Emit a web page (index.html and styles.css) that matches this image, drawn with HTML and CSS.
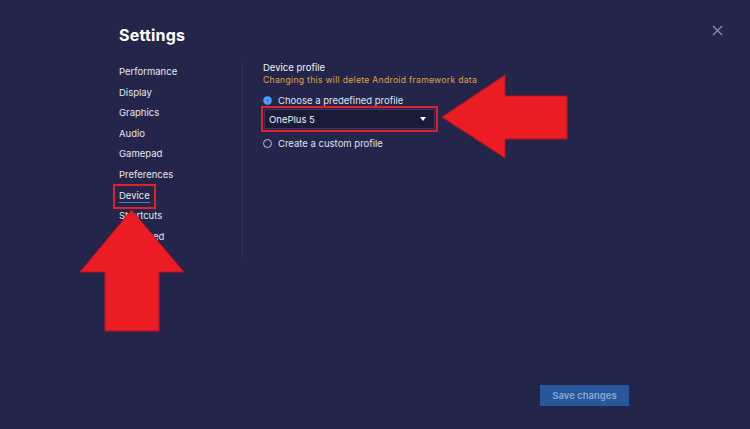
FILE: index.html
```html
<!DOCTYPE html>
<html lang="en">
<head>
    <meta charset="UTF-8">
    <meta name="viewport" content="width=device-width, initial-scale=1.0">
    <title>Settings</title>
    <link rel="stylesheet" href="styles.css">
</head>
<body>
    <div class="settings">
        <div class="close">
            <svg width="11" height="11" viewBox="0 0 11 11"><path d="M1 1L10 10M10 1L1 10" stroke="#8e93b6" stroke-width="1.2"/></svg>
        </div>

        <div class="layout">
            <div class="sidebar">
                <h1 class="title">Settings</h1>
                <ul class="nav">
                    <li>Performance</li>
                    <li>Display</li>
                    <li>Graphics</li>
                    <li>Audio</li>
                    <li>Gamepad</li>
                    <li>Preferences</li>
                    <li class="active"><span>Device</span></li>
                    <li>Shortcuts</li>
                    <li>Advanced</li>
                </ul>
            </div>

            <div class="panel">
                <div class="label">Device profile</div>
                <div class="warning">Changing this will delete Android framework data</div>
                <div class="radio-row">
                    <span class="radio checked"></span>
                    <span>Choose a predefined profile</span>
                </div>
                <div class="select-wrap">
                    <div class="select">
                        <span>OnePlus 5</span>
                        <span class="caret"></span>
                    </div>
                </div>
                <div class="radio-row">
                    <span class="radio"></span>
                    <span>Create a custom profile</span>
                </div>
            </div>
        </div>

        <div class="footer">
            <button class="save">Save changes</button>
        </div>

        <!-- annotation arrows -->
        <svg class="arrows" width="750" height="429" viewBox="0 0 750 429">
            <polygon points="442,117 505,75 505,96 567,96 567,139 505,139 505,158" fill="#ec1c24" stroke="#b5141c" stroke-width="1"/>
            <polygon points="131.5,210 184,272 159,272 159,331 105,331 105,272 80,272" fill="#ec1c24" stroke="#b5141c" stroke-width="1"/>
        </svg>
    </div>
</body>
</html>
```

FILE: styles.css
```css
body {
    margin: 0;
    background: #23264a;
    font-family: 'Inter', 'Open Sans', sans-serif;
    color: #e9ebf4;
}

.settings {
    position: relative;
    display: flex;
    flex-direction: column;
    height: 429px;
    padding: 0 121px 23px 119px;
    box-sizing: border-box;
}

.close {
    position: absolute;
    top: 25px;
    left: 712px;
    line-height: 0;
}

.layout {
    display: flex;
    flex: 1;
}

.sidebar {
    width: 123px;
}

.title {
    margin: 0;
    padding-top: 24px;
    font-size: 16px;
    line-height: 22px;
    font-weight: 700;
    color: #ffffff;
    letter-spacing: 0.2px;
}

.nav {
    list-style: none;
    margin: 16px 0 0;
    padding: 0;
}

.nav li {
    font-size: 9.5px;
    line-height: 20.6px;
    height: 20.6px;
    color: #e4e6f0;
}

.nav li.active span {
    display: inline-block;
    border-bottom: 1.5px solid #3f7fe0;
    line-height: 12px;
    outline: 2px solid #e2202a;
    outline-offset: 4px;
}

.panel {
    align-self: flex-start;
    margin-top: 62px;
    height: 195px;
    border-left: 1px solid rgba(255, 255, 255, 0.07);
    padding-left: 20px;
    font-size: 9.5px;
}

.label {
    color: #eef0f8;
    line-height: 12px;
}

.warning {
    color: #e0a244;
    font-size: 8.6px;
    letter-spacing: 0.3px;
    line-height: 12px;
}

.radio-row {
    display: flex;
    align-items: center;
    gap: 6px;
    height: 14px;
    margin-top: 7px;
    color: #dfe2ee;
}

.radio {
    width: 7px;
    height: 7px;
    border-radius: 50%;
    border: 1px solid #bfc3d6;
}

.radio.checked {
    background: #3a86ee;
    border-color: #3a86ee;
    box-shadow: inset 0 0 0 1.5px #6fa6f4;
}

.select-wrap {
    width: 171px;
    margin: -1px 0 -3px -2px;
    border: 2px solid #e2202a;
    padding: 1px;
}

.select {
    display: flex;
    align-items: center;
    justify-content: space-between;
    height: 18px;
    padding: 0 8px 0 4px;
    background: #191b39;
    border: 1px solid #363a62;
    color: #f2f3f8;
}

.caret {
    width: 0;
    height: 0;
    border-left: 3px solid transparent;
    border-right: 3px solid transparent;
    border-top: 4px solid #ffffff;
}

.footer {
    display: flex;
    justify-content: flex-end;
}

.save {
    width: 89px;
    height: 21px;
    border: none;
    background: #28579b;
    color: #8ea7d0;
    font-family: inherit;
    font-size: 9.5px;
    font-weight: 600;
}

.arrows {
    position: absolute;
    top: 0;
    left: 0;
    pointer-events: none;
}
```
